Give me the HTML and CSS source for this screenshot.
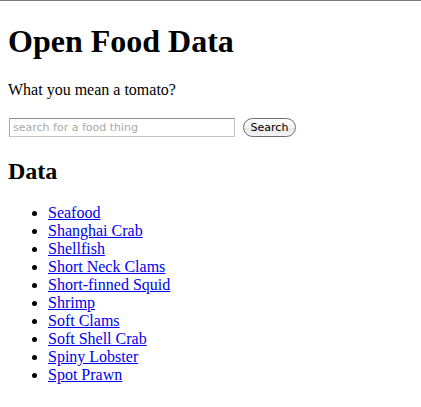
FILE: index.html
```html
<!DOCTYPE html>
<html>
<head>
<meta charset="utf-8">
<link rel="stylesheet" href="styles.css">
</head>
<body>
<h1 class="title">Open Food Data</h1>
<p class="lead">What you mean a tomato?</p>
<form class="search">
<input class="search-input" type="text" placeholder="search for a food thing">
<button class="search-btn" type="button">Search</button>
</form>
<h2 class="section">Data</h2>
<ul class="items">
<li><a href="#">Seafood</a></li>
<li><a href="#">Shanghai Crab</a></li>
<li><a href="#">Shellfish</a></li>
<li><a href="#">Short Neck Clams</a></li>
<li><a href="#">Short-finned Squid</a></li>
<li><a href="#">Shrimp</a></li>
<li><a href="#">Soft Clams</a></li>
<li><a href="#">Soft Shell Crab</a></li>
<li><a href="#">Spiny Lobster</a></li>
<li><a href="#">Spot Prawn</a></li>
</ul>
</body>
</html>
```
FILE: styles.css
```css
html {
  border-top: 1px solid #7a7a7a;
}
body {
  margin: 8px;
  font-family: "Liberation Serif", "Times New Roman", serif;
  font-size: 16px;
  color: #000;
  background: #fff;
}
.title {
  font-size: 32px;
  font-weight: bold;
  margin: 14px 0 21px;
}
.lead {
  margin: 16px 0 19px;
}
.search {
  display: flex;
  align-items: center;
  gap: 8px;
  margin: 0;
}
.search-input {
  width: 226px;
  height: 19px;
  box-sizing: border-box;
  margin: 0 0 0 1px;
  padding: 1px 3px;
  border: 1px solid #c4c4c4;
  border-top-color: #8f8f8f;
  border-left-color: #a8a8a8;
  font-family: "DejaVu Sans", "Liberation Sans", sans-serif;
  font-size: 11px;
  background: #fff;
}
.search-input::placeholder {
  color: #a8a8a8;
}
.search-btn {
  height: 19px;
  width: 53px;
  padding: 0;
  border: 1px solid #6e6e6e;
  border-radius: 10px;
  background: linear-gradient(#ffffff, #f3f3f3 50%, #e4e4e4 51%, #f6f6f6);
  font-family: "DejaVu Sans", "Liberation Sans", sans-serif;
  font-size: 11px;
  color: #000;
}
.section {
  font-size: 24px;
  font-weight: bold;
  margin: 21px 0 19px;
}
.items {
  margin: 16px 0;
  padding-left: 40px;
}
.items li {
  line-height: 18px;
}
.items a {
  color: #0000ee;
}
```
